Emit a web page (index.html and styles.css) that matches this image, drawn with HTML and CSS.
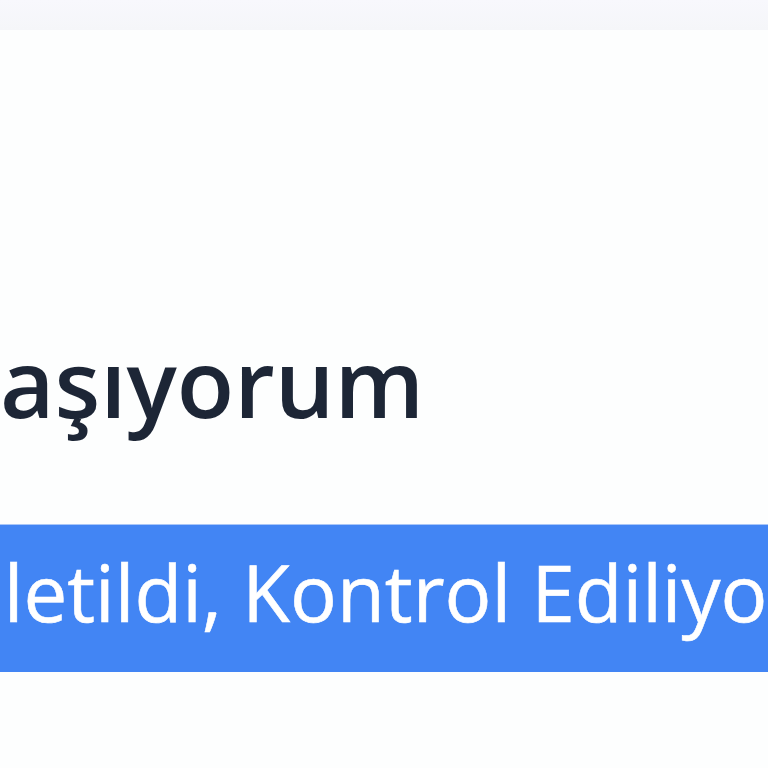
FILE: index.html
```html
<!DOCTYPE html>
<html lang="tr">
<head>
<meta charset="utf-8">
<link rel="stylesheet" href="styles.css">
</head>
<body>
<div class="page">
  <div class="topbar"></div>
  <div class="content">
    <h1 class="title">aşıyorum</h1>
    <div class="status"><span class="status-text">İletildi, Kontrol Ediliyor</span></div>
  </div>
</div>
</body>
</html>
```
FILE: styles.css
```css
html, body {
  margin: 0;
  padding: 0;
  background: #fdfefe;
  overflow: hidden;
}
.page {
  width: 768px;
  height: 768px;
  overflow: hidden;
  font-family: "Open Sans", "Noto Sans", sans-serif;
}
.topbar {
  height: 30px;
  background: linear-gradient(#f8f8fd, #f5f6f9);
}
.content {
  display: flex;
  flex-direction: column;
}
.title {
  margin: 292px 0 0 0;
  font-size: 94px;
  font-weight: 600;
  line-height: 120px;
  color: #1d2636;
  white-space: nowrap;
}
.status {
  margin-top: 82px;
  height: 148px;
  background: #4285f4;
  display: flex;
  align-items: center;
  overflow: hidden;
  border-top: 1px solid #a9c6f8;
  box-sizing: border-box;
}
.status-text {
  margin-left: -18px;
  margin-top: -14px;
  font-size: 78px;
  font-weight: 400;
  color: #ffffff;
  white-space: nowrap;
  -webkit-text-stroke: 0.6px #ffffff;
}
```
